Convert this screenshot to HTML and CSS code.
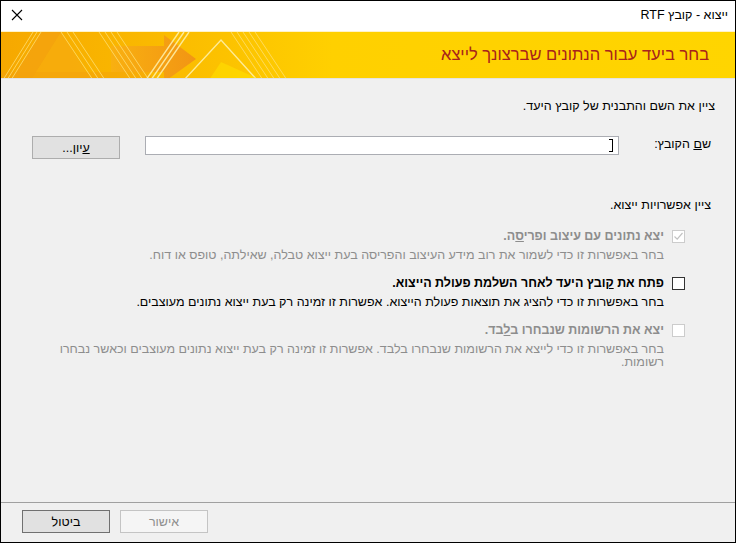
FILE: index.html
```html
<!DOCTYPE html>
<html lang="he" dir="rtl">
<head>
    <meta charset="UTF-8">
    <title>ייצוא - קובץ RTF</title>
    <link rel="stylesheet" href="styles.css">
</head>
<body>
    <div class="window">
        <div class="titlebar">
            <span class="title">ייצוא - קובץ RTF</span>
            <svg class="close" width="12" height="12" viewBox="0 0 12 12">
                <path d="M1 1 L11 11 M11 1 L1 11" stroke="#000" stroke-width="1.1" fill="none"/>
            </svg>
        </div>

        <div class="banner">
            <svg class="banner-art" width="736" height="48" viewBox="0 0 736 48" preserveAspectRatio="none">
                <defs>
                    <linearGradient id="bg" x1="0" x2="1" y1="0" y2="0">
                        <stop offset="0" stop-color="#f6a800"/>
                        <stop offset="0.25" stop-color="#fbbd00"/>
                        <stop offset="0.45" stop-color="#ffd000"/>
                        <stop offset="1" stop-color="#ffd500"/>
                    </linearGradient>
                    <linearGradient id="arrow" x1="0" x2="1" y1="0" y2="0">
                        <stop offset="0" stop-color="#f9b010"/>
                        <stop offset="1" stop-color="#f29514"/>
                    </linearGradient>
                </defs>
                <rect width="736" height="48" fill="url(#bg)"/>
                <polygon points="10,48 40,0 60,0 90,48" fill="#f7ab10" opacity="0.7"/>
                <polygon points="10,48 40,0 60,0 30,48" fill="#f4a20c" opacity="0.8"/>
                <polygon points="0,40 150,40 150,48 0,48" fill="#f3a10c" opacity="0.5"/>
                <polygon points="110,14 163,14 163,3 195,27 163,50 163,40 110,40" fill="url(#arrow)"/>
                <g stroke="#ffe27a" stroke-width="1" opacity="0.75">
                    <line x1="2" y1="48" x2="32" y2="0"/>
                    <line x1="6" y1="48" x2="36" y2="0"/>
                    <line x1="10" y1="48" x2="40" y2="0"/>
                    <line x1="60" y1="0" x2="92" y2="48"/>
                    <line x1="66" y1="0" x2="98" y2="48"/>
                    <line x1="72" y1="0" x2="104" y2="48"/>
                    <line x1="98" y1="0" x2="130" y2="48"/>
                    <line x1="104" y1="0" x2="136" y2="48"/>
                    <line x1="110" y1="0" x2="142" y2="48"/>
                    <line x1="116" y1="0" x2="148" y2="48"/>
                    <line x1="230" y1="0" x2="262" y2="48"/>
                    <line x1="236" y1="0" x2="268" y2="48"/>
                    <line x1="242" y1="0" x2="274" y2="48"/>
                    <line x1="248" y1="0" x2="280" y2="48"/>
                    <line x1="254" y1="0" x2="286" y2="48"/>
                </g>
                <g stroke="#fff3b0" stroke-width="1.4" opacity="0.85" fill="none">
                    <polyline points="183,48 220,8 256,48"/>
                    <line x1="145" y1="48" x2="178" y2="0"/>
                    <line x1="150" y1="48" x2="183" y2="0"/>
                    <line x1="155" y1="48" x2="188" y2="0"/>
                </g>
                <polygon points="208,48 220,30 260,48" fill="#ffe600" opacity="0.5"/>
            </svg>
            <h1 class="banner-title">בחר ביעד עבור הנתונים שברצונך לייצא</h1>
        </div>

        <div class="content">
            <p class="intro">ציין את השם והתבנית של קובץ היעד.</p>

            <div class="file-row">
                <label class="file-label" for="fname">ש<u>ם</u> הקובץ:</label>
                <div class="file-input"><span class="caret"></span></div>
                <button class="btn browse"><u>ע</u>יון...</button>
            </div>

            <p class="options-head">ציין אפשרויות ייצוא.</p>

            <div class="option disabled">
                <div class="option-line">
                    <span class="check">
                        <svg width="11" height="11" viewBox="0 0 11 11"><path d="M1.5 5.5 L4.2 8.2 L9.5 2" stroke="#c2c2c2" stroke-width="1.2" fill="none"/></svg>
                    </span>
                    <span class="option-label">יצא נתונים עם עיצוב ופרי<u>ס</u>ה.</span>
                </div>
                <p class="option-desc">בחר באפשרות זו כדי לשמור את רוב מידע העיצוב והפריסה בעת ייצוא טבלה, שאילתה, טופס או דוח.</p>
            </div>

            <div class="option">
                <div class="option-line">
                    <span class="check"></span>
                    <span class="option-label">פתח את <u>ק</u>ובץ היעד לאחר השלמת פעולת הייצוא.</span>
                </div>
                <p class="option-desc">בחר באפשרות זו כדי להציג את תוצאות פעולת הייצוא. אפשרות זו זמינה רק בעת ייצוא נתונים מעוצבים.</p>
            </div>

            <div class="option disabled">
                <div class="option-line">
                    <span class="check"></span>
                    <span class="option-label">יצא את הרשומות שנבחרו ב<u>ל</u>בד.</span>
                </div>
                <p class="option-desc">בחר באפשרות זו כדי לייצא את הרשומות שנבחרו בלבד. אפשרות זו זמינה רק בעת ייצוא נתונים מעוצבים וכאשר נבחרו<br>רשומות.</p>
            </div>
        </div>

        <div class="footer">
            <button class="btn ok" disabled>אישור</button>
            <button class="btn cancel">ביטול</button>
        </div>
    </div>
</body>
</html>
```

FILE: styles.css
```css
* {
    box-sizing: border-box;
}
html, body {
    margin: 0;
    padding: 0;
}
body {
    font-family: "Liberation Sans", Arial, sans-serif;
    font-size: 12.5px;
    color: #000;
    background: #f0f0f0;
}
.window {
    width: 736px;
    height: 543px;
    border: 1px solid #000;
    background: #f0f0f0;
    display: flex;
    flex-direction: column;
}
.titlebar {
    height: 30px;
    background: #fff;
    display: flex;
    align-items: center;
    justify-content: space-between;
    padding: 0 7px 0 10px;
}
.title {
    padding-bottom: 2px;
}
.close {
    display: block;
    margin-bottom: 3px;
}
.banner {
    position: relative;
    height: 48px;
    border-top: 1px solid #fff3c8;
    border-bottom: 1px solid #e3e3e3;
    display: flex;
    align-items: center;
    overflow: hidden;
}
.banner-art {
    position: absolute;
    top: 0;
    left: 0;
}
.banner-title {
    position: relative;
    margin: 0 26px 0 0;
    font-size: 16.5px;
    font-weight: normal;
    color: #a8231b;
    padding-bottom: 1px;
}
.content {
    flex: 1;
    padding: 0 20px 0 0;
}
.intro {
    margin: 20px 0 0;
}
.file-row {
    display: flex;
    align-items: flex-start;
    margin-top: 23px;
}
.file-label {
    width: 96px;
    padding-top: 1px;
    padding-right: 4px;
}
.file-input {
    width: 474px;
    height: 19px;
    background: #fff;
    border: 1px solid #abadb3;
    padding: 2px 5px;
}
.caret {
    display: block;
    width: 4px;
    height: 13px;
    border: 1px solid #000;
    border-left: none;
}
.btn {
    font-family: inherit;
    font-size: 12.5px;
    width: 88px;
    height: 23px;
    background: #e1e1e1;
    border: 1px solid #adadad;
    padding: 0;
    color: #000;
}
.browse {
    margin-right: 25px;
}
.options-head {
    margin: 39px 4px 0 0;
}
.option {
    margin-top: 17px;
}
.option + .option {
    margin-top: 14px;
}
.option-line {
    display: flex;
    align-items: center;
    margin-right: 30px;
}
.check {
    width: 13px;
    height: 13px;
    border: 1px solid #333;
    background: #fff;
    display: flex;
    align-items: center;
    justify-content: center;
    margin-left: 8px;
}
.option.disabled .check {
    border-color: #cccccc;
}
.option-label {
    font-weight: bold;
}
.option-desc {
    margin: 6px 51px 0 0;
    line-height: 13px;
    white-space: nowrap;
}
.option.disabled .option-label,
.option.disabled .option-desc {
    color: #8d8d8d;
}
.footer {
    height: 40px;
    border-top: 1px solid #a0a0a0;
    display: flex;
    justify-content: flex-end;
    align-items: flex-start;
    gap: 10px;
    padding: 7px 0 0 21px;
}
.cancel {
    border-color: #707070;
}
.ok {
    background: #f5f5f5;
    border-color: #c4c4c4;
    color: #8d8d8d;
}
```
